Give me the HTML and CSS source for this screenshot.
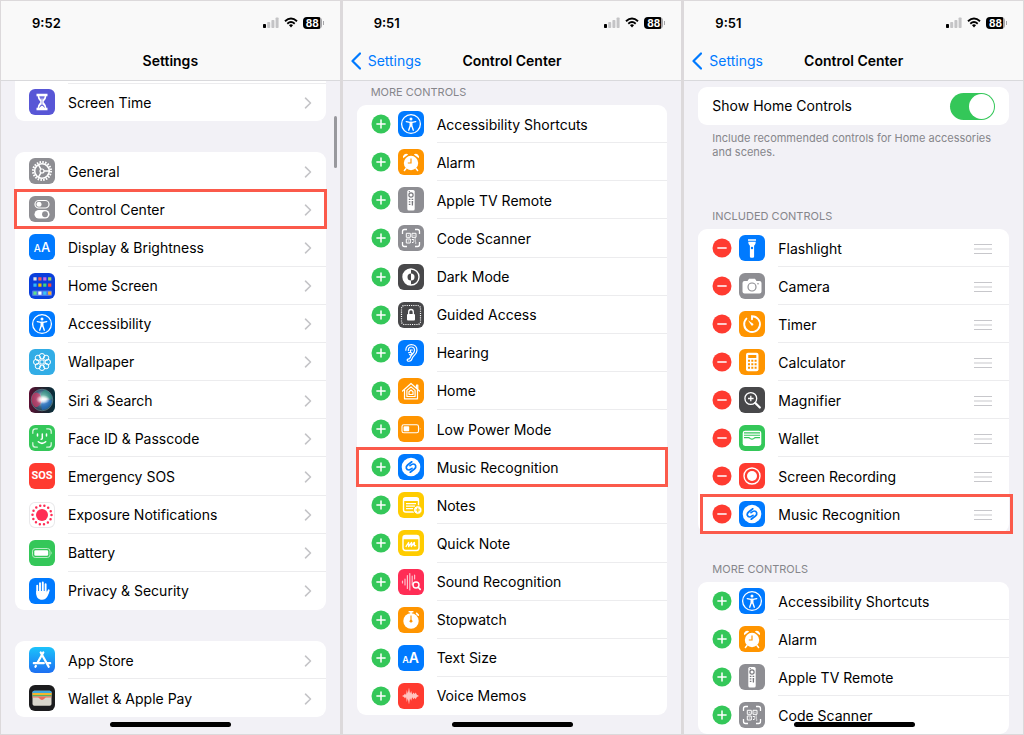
FILE: index.html
```html
<!DOCTYPE html>
<html lang="en">
<head>
    <meta charset="UTF-8">
    <meta name="viewport" content="width=device-width, initial-scale=1.0">
    <title>Settings - Control Center</title>
    <link rel="stylesheet" href="styles.css">
</head>
<body>
    <!-- icon sprite -->
    <svg class="sprite" aria-hidden="true">
        <defs>
            <linearGradient id="g-store" x1="0" y1="0" x2="0" y2="1">
                <stop offset="0" stop-color="#1cc3fb"/>
                <stop offset="1" stop-color="#1d6ff2"/>
            </linearGradient>
            <linearGradient id="g-siri" x1="0" y1="0" x2="1" y2="0">
                <stop offset="0" stop-color="#5c0f33"/>
                <stop offset="0.5" stop-color="#26222e"/>
                <stop offset="1" stop-color="#06303c"/>
            </linearGradient>
            <radialGradient id="g-orb" cx="0.55" cy="0.45" r="0.55">
                <stop offset="0" stop-color="#fff"/>
                <stop offset="0.3" stop-color="#b9c9d8"/>
                <stop offset="0.7" stop-color="#4a86a8" stop-opacity="0.7"/>
                <stop offset="1" stop-color="#2a5f70" stop-opacity="0.6"/>
            </radialGradient>
            <radialGradient id="g-glow">
                <stop offset="0" stop-color="#fff"/>
                <stop offset="0.4" stop-color="#fff" stop-opacity="0.8"/>
                <stop offset="1" stop-color="#fff" stop-opacity="0"/>
            </radialGradient>
        </defs>

        <symbol id="chevron" viewBox="0 0 8 12">
            <path d="M1.5 1.2 6.5 6 1.5 10.8" fill="none" stroke="currentColor" stroke-width="1.6" stroke-linecap="round" stroke-linejoin="round"/>
        </symbol>
        <symbol id="back" viewBox="0 0 10 18">
            <path d="M9 1.5 1.5 9 9 16.5" fill="none" stroke="currentColor" stroke-width="2.2" stroke-linecap="round" stroke-linejoin="round"/>
        </symbol>
        <symbol id="add" viewBox="0 0 20 20">
            <circle cx="10" cy="10" r="9.5" fill="#34c759"/>
            <path d="M10 5.9v8.2M5.9 10h8.2" stroke="#fff" stroke-width="1.5" stroke-linecap="round"/>
        </symbol>
        <symbol id="remove" viewBox="0 0 20 20">
            <circle cx="10" cy="10" r="9.5" fill="#ff3b30"/>
            <path d="M5.9 10h8.2" stroke="#fff" stroke-width="1.5" stroke-linecap="round"/>
        </symbol>
        <symbol id="grip" viewBox="0 0 20 12">
            <path d="M1 1.5h18M1 6h18M1 10.5h18" stroke="#c7c7cb" stroke-width="1.2"/>
        </symbol>

        <symbol id="signal" viewBox="0 0 16 11">
            <rect x="0" y="7" width="3" height="4" rx="0.8"/>
            <g fill="#c4c4c6">
                <rect x="4.2" y="5" width="3" height="6" rx="0.8"/>
                <rect x="8.4" y="3" width="3" height="8" rx="0.8"/>
                <rect x="12.6" y="0.5" width="3" height="10.5" rx="0.8"/>
            </g>
        </symbol>
        <symbol id="wifi" viewBox="0 0 14 11">
            <g fill="none" stroke="#000" stroke-width="1.9">
                <path d="M1 4.2Q7 -1.4 13 4.2"/>
                <path d="M3.3 6.7Q7 3.4 10.7 6.7"/>
            </g>
            <path d="M7 7.2q1.2 0 2 1L7 10.6 5 8.2q.8-1 2-1z"/>
        </symbol>

        <symbol id="hourglass" viewBox="0 0 26 26">
            <path d="M7.5 4.700h11v2.600h-1.200c0 3-2 4.200-2.800 5.700.8 1.500 2.800 2.700 2.800 5.700h1.200v2.600h-11v-2.600h1.200c0-3 2-4.200 2.800-5.700-.8-1.500-2.800-2.700-2.800-5.700H7.500z" fill="#fff"/>
            <path d="M10.300 7.300h5.400c-.2 1.700-1.300 2.500-2.100 3.900v4.300c1.100.6 1.900 1.600 2.200 3.200h-5.600c.3-1.600 1.100-2.600 2.200-3.200v-4.300c-.8-1.400-1.900-2.200-2.100-3.900z" fill="#5856d6" opacity=".85"/>
            <path d="M13 9.500v6M11 18.700q2-3 4 0z" stroke="#fff" fill="#fff"/>
        </symbol>
        <symbol id="gear" viewBox="0 0 26 26">
            <g fill="none" stroke="#fff">
                <circle cx="13" cy="13" r="9" stroke-width="2" stroke-dasharray="1.57 1.257"/>
                <circle cx="13" cy="13" r="7.3" stroke-width="1.6"/>
                <circle cx="13" cy="13" r="2" stroke-width="1.2"/>
                <path d="M15 13h5M12 11.300 9.500 6.800M12 14.700l-2.500 4.500" stroke-width="1.5"/>
            </g>
        </symbol>
        <symbol id="toggles" viewBox="0 0 26 26">
            <rect x="6" y="4.5" width="14" height="7.5" rx="3.75" fill="none" stroke="#fff" stroke-width="1.2"/>
            <circle cx="10" cy="8.25" r="2.5" fill="#fff"/>
            <rect x="5.5" y="14" width="15" height="8.5" rx="4.25" fill="#fff"/>
            <circle cx="16" cy="18.25" r="2.9" fill="#8e8e93"/>
        </symbol>
        <symbol id="homescreen" viewBox="0 0 26 26">
            <rect x="3" y="17.5" width="20" height="5.5" rx="1.2" fill="#4d75e8"/>
            <g stroke-width="3.2" fill="none">
                <path d="M4.400 5.800h3.200" stroke="#e5e5ea"/>
                <path d="M9.300 5.800h3.200" stroke="#ff5a52"/>
                <path d="M14.200 5.800h3.200" stroke="#c86bea"/>
                <path d="M19.100 5.800h3.200" stroke="#a4d65e"/>
                <path d="M4.400 12.200h3.200" stroke="#32b8f5"/>
                <path d="M9.300 12.200h3.200" stroke="#ffb800"/>
                <path d="M14.200 12.200h3.200" stroke="#43d67c"/>
                <path d="M19.100 12.200h3.200" stroke="#ff453a"/>
                <path d="M4.400 20.200h3.200" stroke="#5fe08a"/>
                <path d="M9.300 20.200h3.200" stroke="#fff"/>
                <path d="M14.200 20.200h3.200" stroke="#37c3f7"/>
                <path d="M19.100 20.200h3.200" stroke="#ffac30"/>
            </g>
        </symbol>
        <symbol id="access" viewBox="0 0 26 26">
            <circle cx="13" cy="13" r="9.4" fill="none" stroke="#fff" stroke-width="1.3"/>
            <circle cx="13" cy="7.9" r="1.5" fill="#fff"/>
            <path d="M8.300 10.600l3.600.8h2.200l3.600-.8M12.200 11.400v3.400l-1.500 4.400M13.800 11.400v3.400l1.500 4.400M13 11v4" fill="none" stroke="#fff" stroke-width="1.4" stroke-linecap="round" stroke-linejoin="round"/>
        </symbol>
        <symbol id="flower" viewBox="0 0 26 26">
            <g fill="none" stroke="#fff" stroke-width="1">
                <circle cx="13" cy="13" r="2.2"/>
                <circle cx="13" cy="7.2" r="2.7"/>
                <circle cx="17.1" cy="8.9" r="2.7"/>
                <circle cx="18.8" cy="13" r="2.7"/>
                <circle cx="17.1" cy="17.1" r="2.7"/>
                <circle cx="13" cy="18.8" r="2.7"/>
                <circle cx="8.9" cy="17.1" r="2.7"/>
                <circle cx="7.2" cy="13" r="2.7"/>
                <circle cx="8.9" cy="8.9" r="2.7"/>
            </g>
        </symbol>
        <symbol id="siri" viewBox="0 0 26 26">
            <rect width="26" height="26" fill="url(#g-siri)"/>
            <circle cx="13" cy="13" r="10.8" fill="url(#g-orb)" stroke="#6f8f99" stroke-width=".6"/>
            <path d="M3 9c3-6 8-4 10 3-1 6-5 9-7 8-3-2-4-7-3-11z" fill="#e0315f" opacity=".65"/>
            <path d="M13 13c4 0 8-1 10 1-1 5-5 9-10 9-1-3-1-6 0-10z" fill="#1e6fd0" opacity=".6"/>
            <path d="M12 12c-1-5 1-8 4-9 4 1 7 5 7 9-4-1-7-1-11 0z" fill="#2fa57f" opacity=".5"/>
            <ellipse cx="14" cy="12.500" rx="7" ry="4.500" fill="url(#g-glow)"/>
        </symbol>
        <symbol id="faceid" viewBox="0 0 26 26">
            <g fill="none" stroke="#fff" stroke-width="1.5" stroke-linecap="round">
                <path d="M3.800 8.300V6.500q0-2.700 2.700-2.700h1.800M17.700 3.800h1.800q2.700 0 2.700 2.700v1.800M22.200 17.700v1.800q0 2.700-2.700 2.700h-1.800M8.300 22.200H6.500q-2.700 0-2.700-2.700v-1.800" stroke="#d6f4dd" stroke-width="1.3"/>
                <path d="M8.500 9v2M17.500 9v2M13.300 9v4.200q0 1-1.200 1M9.300 16.800q3.700 3.200 7.400 0"/>
            </g>
        </symbol>
        <symbol id="exposure" viewBox="0 0 26 26">
            <circle cx="13" cy="13" r="6" fill="#ff2d55"/>
            <circle cx="13" cy="13" r="9.5" fill="none" stroke="#ff2d55" stroke-width="2.5" stroke-linecap="round" stroke-dasharray="0 4.264"/>
        </symbol>
        <symbol id="battery" viewBox="0 0 26 26">
            <rect x="3.5" y="8.5" width="17.5" height="9" rx="2.7" fill="none" stroke="#b9ecc6"/>
            <rect x="5.3" y="10.2" width="13.9" height="5.6" rx="1.4" fill="#fff"/>
            <path d="M22.300 11.200q1.500 1.800 0 3.600z" fill="#b9ecc6"/>
        </symbol>
        <symbol id="hand" viewBox="0 0 26 26">
            <g stroke="#fff" stroke-width="1.9" stroke-linecap="round" fill="none">
                <path d="M8.200 7.800v8M11 5.200v9M13.800 4.500v9M16.600 6.200v9M19.700 12.300l-2.400 5"/>
            </g>
            <path d="M7.300 13h10.200v2.300l1.900-2.200 1 .5c-1.200 3.400-2.500 8.200-7.200 8.200-4 0-5.900-2.600-5.900-6z" fill="#fff"/>
        </symbol>
        <symbol id="appstore" viewBox="0 0 26 26">
            <rect width="26" height="26" fill="url(#g-store)"/>
            <g stroke="#fff" stroke-width="2.2" stroke-linecap="round" fill="none">
                <path d="M14.300 5.500 8.200 16.200M11.700 5.500l8 14.300M4.800 16.200h10M18.300 16.200h2.900M6.900 18.900l-.5.900"/>
            </g>
        </symbol>
        <symbol id="applepay" viewBox="0 0 26 26">
            <rect x="3.5" y="5.8" width="19" height="15" rx="1.8" fill="#d9d6cc"/>
            <path d="M3.500 8V7.300q0-1.500 1.500-1.500h16q1.500 0 1.500 1.500V8z" fill="#3fa9e0"/>
            <path d="M3.500 8h19v2h-19z" fill="#f4b62c"/>
            <path d="M3.500 10h19v1.500h-19z" fill="#58b267"/>
            <path d="M3.500 11.400h19v1.200h-5.300q-1 0-1.600 1-2.600 2.600-5.200 0-.6-1-1.600-1H3.500z" fill="#ef6a5d"/>
        </symbol>

        <symbol id="alarm" viewBox="0 0 26 26">
            <g fill="#fff">
                <circle cx="13" cy="14" r="7.2"/>
                <path d="M5.200 9.300a3.200 3.200 0 0 1 5-3.700zM20.800 9.300a3.200 3.200 0 0 0-5-3.700z"/>
            </g>
            <path d="M8 19.500l-1.600 2M18 19.500l1.600 2" stroke="#fff" stroke-width="1.5" stroke-linecap="round"/>
            <path d="M13 9.500V14H9.800" fill="none" stroke="#ff9500" stroke-width="1.2"/>
        </symbol>
        <symbol id="remote" viewBox="0 0 26 26">
            <rect x="9.3" y="3" width="7.4" height="20.5" rx="1.6" fill="#fff"/>
            <circle cx="13" cy="8" r="2.1" fill="none" stroke="#77777c" stroke-width="1.2"/>
            <path d="M10.800 12.300h1.600M13.600 12.300h1.600M10.800 14.800h1.600M13.600 14.800h1.600M10.800 17.300h1.600M14.400 14v4.500M10.800 4.700h1" stroke="#77777c" stroke-width="1.3"/>
        </symbol>
        <symbol id="scanner" viewBox="0 0 26 26">
            <g fill="none" stroke="#fff" stroke-width="1.3">
                <path d="M4.500 9V6.500q0-2 2-2H9M17 4.500h2.500q2 0 2 2V9M21.500 17v2.500q0 2-2 2H17M9 21.500H6.500q-2 0-2-2V17"/>
                <path d="M8.300 8.300h4v4h-4zM14 8.300h4v4h-4zM8.300 14h4v4h-4zM9.800 10.300h1M15.500 10.300h1M9.800 16h1" stroke-width="1"/>
                <path d="M13.800 14.500h2M16.500 16h1.500M14 17.500h1.500M16.500 14h1.300M15 16h1M17 18h1.300" stroke-width="1.2"/>
            </g>
        </symbol>
        <symbol id="dark" viewBox="0 0 26 26">
            <circle cx="13" cy="13" r="8" fill="none" stroke="#fff" stroke-width="1.4"/>
            <path d="M13 5a8 8 0 0 0 0 16v-4.500a3.500 3.500 0 0 1 0-7z" fill="#fff"/>
            <path d="M13 9.500a3.500 3.500 0 0 1 0 7z" fill="#fff"/>
        </symbol>
        <symbol id="guided" viewBox="0 0 26 26">
            <rect x="3.5" y="3.5" width="19" height="19" rx="3" fill="none" stroke="#fff" stroke-width="1.2" stroke-dasharray="1.1 1.1"/>
            <rect x="9" y="12" width="8" height="6.5" rx="1" fill="#fff"/>
            <path d="M10.700 12V9.900q0-2.400 2.300-2.400t2.300 2.400V12" fill="none" stroke="#fff" stroke-width="1.3"/>
        </symbol>
        <symbol id="ear" viewBox="0 0 26 26">
            <g fill="none" stroke="#fff" stroke-width="1.2" stroke-linecap="round" stroke-linejoin="round">
                <path d="M7.800 10.200C7.800 6.800 10.200 4.600 13.300 4.600c3.500 0 5.700 2.500 5.700 5.600 0 4.200-4 5.300-4.800 8.200-.7 2.400-2.300 3.200-4.200 2.700-1.200-.4-1-1.900.1-1.900 2.500 0 2-2.300 3.400-4.300"/>
                <path d="M10.300 10.500c0-2.200 1.200-3.500 3-3.500 2 0 3.200 1.400 3.200 3.200 0 2.200-1.500 3.200-2.700 4.800M10.600 12.700c1-.6 2.700-.6 3.200.5.500 1.200-1 2.300-2.200 1.300M12.700 12.300l-.4-2.300h2"/>
            </g>
        </symbol>
        <symbol id="home" viewBox="0 0 26 26">
            <g fill="none" stroke="#fff" stroke-width="1.2" stroke-linejoin="round" stroke-linecap="round">
                <path d="M4.500 13 13 5.500l8.500 7.500M18.500 9.800V7h1.300v4"/>
                <path d="M6.500 12v8.800h13V12"/>
                <path d="M8.900 12.400 13 8.900l4.100 3.500v6.100H8.900z"/>
                <path d="M11 13.700l2-1.700 2 1.700v2.800h-4z"/>
            </g>
        </symbol>
        <symbol id="lowpower" viewBox="0 0 26 26">
            <rect x="4" y="8.7" width="16.5" height="8" rx="1.8" fill="none" stroke="#fff" stroke-width="1.1"/>
            <rect x="5.6" y="10.2" width="5.6" height="5" rx=".8" fill="#fff"/>
            <path d="M21.800 11.300q1.400 1.400 0 2.800z" fill="#fff"/>
        </symbol>
        <symbol id="shazam" viewBox="0 0 26 26">
            <circle cx="13" cy="13" r="9.3" fill="#fff"/>
            <g fill="none" stroke="#007aff" stroke-width="1.7" stroke-linecap="round">
                <path d="M13.800 7.800 9.600 11c-2.500 2-1.300 5 1.200 5 1.200 0 1.800-.6 3.200-1.700"/>
                <path d="M12.200 18.200l4.200-3.200c2.500-2 1.300-5-1.200-5-1.200 0-1.800.6-3.200 1.700"/>
            </g>
        </symbol>
        <symbol id="notes" viewBox="0 0 26 26">
            <rect x="5.5" y="5.7" width="15" height="14.3" rx="2.2" fill="none" stroke="#fff" stroke-width="1.4"/>
            <path d="M5.500 6h15v3h-15z" fill="#fff"/>
            <path d="M8 11.700h10M8 14.200h9M8 16.700h7" stroke="#fff" stroke-width="1.2"/>
            <circle cx="19.8" cy="18" r="4.3" fill="#fff" stroke="#ffcc00"/>
            <path d="M19.800 15.800v4.400M17.600 18H22" stroke="#ffcc00" stroke-width="1.2"/>
        </symbol>
        <symbol id="quicknote" viewBox="0 0 26 26">
            <rect x="5" y="5.5" width="16" height="15" rx="2.4" fill="none" stroke="#fff" stroke-width="1.4"/>
            <path d="M5 6h16v3.200H5z" fill="#fff"/>
            <path d="M7.800 16.800l2.800-4.300v4l3-4-.4 4 2.800-3.800q.6-.7.500.4l-.3 2.700 2-.1" fill="none" stroke="#fff" stroke-width="1.3" stroke-linejoin="round"/>
        </symbol>
        <symbol id="sound" viewBox="0 0 26 26">
            <g stroke="#ffc0cc" stroke-width="1.2" stroke-linecap="round" fill="none">
                <path d="M4.500 12v2M7 10v6M9.400 6.500v13M11.800 4.500v16.500M14.200 7v9M16.600 6v4"/>
            </g>
            <circle cx="18" cy="16" r="3" fill="none" stroke="#fff" stroke-width="1.4"/>
            <path d="M20.200 18.200l2 2.200" stroke="#fff" stroke-width="1.6" stroke-linecap="round"/>
        </symbol>
        <symbol id="stopwatch" viewBox="0 0 26 26">
            <circle cx="13" cy="14" r="7.7" fill="#fff"/>
            <path d="M11.200 4.800h3.600M13 5v3M18.600 6.400l1.700 1.700" stroke="#fff" stroke-width="1.6" stroke-linecap="round"/>
            <path d="M13 8.500v5" stroke="#ff9500" stroke-width="1.1"/>
            <circle cx="13" cy="14.2" r="1.4" fill="#ff9500"/>
        </symbol>
        <symbol id="voice" viewBox="0 0 26 26">
            <path d="M4 13l2-1 1-1.500 1 1.500.8-5 1 3.500L11 4.500l1 6 1.200-2.500 1 3.500 1.300-2 1.200 1.500 1-1.500 1.200 2.200 2.100 1.300-2.100 1-1.200 2.300-1-1.500-1.200 1.500-1.300-2-1 3.500-1.200-2.500-1 6.200-1.200-6-1 3.500-.8-5-1 1.500-1-1.500z" fill="#ffc4c0"/>
        </symbol>

        <symbol id="flashlight" viewBox="0 0 26 26">
            <path d="M9 4.200h8v1.500H9zM9.200 6.700h7.600q0 2.400-1.700 4.100v10.700q0 1.300-1.300 1.300h-1.600q-1.300 0-1.300-1.300V10.800q-1.700-1.700-1.700-4.100z" fill="#fff"/>
            <circle cx="13" cy="13" r="1.2" fill="#007aff"/>
        </symbol>
        <symbol id="camera" viewBox="0 0 26 26">
            <path d="M5.500 8h3l1.500-2.200h6L17.500 8h3q2 0 2 2v8.500q0 2-2 2h-15q-2 0-2-2V10q0-2 2-2z" fill="#fff"/>
            <circle cx="13" cy="14" r="4" fill="none" stroke="#8e8e93" stroke-width="1.2"/>
            <circle cx="19" cy="10.7" r=".8" fill="#8e8e93"/>
        </symbol>
        <symbol id="timer" viewBox="0 0 26 26">
            <path d="M13 8.300V5.200A7.900 7.900 0 1 1 7.400 7.600" fill="none" stroke="#fff" stroke-width="1.9" stroke-linecap="round"/>
            <path d="M9 9.200l5.200 3.500q.8 1.500-.8 1.900-.9.200-1.300-.6z" fill="#fff"/>
        </symbol>
        <symbol id="calculator" viewBox="0 0 26 26">
            <rect x="7" y="3.8" width="12.5" height="18.5" rx="2" fill="#fff"/>
            <path d="M9.200 6h8.100v3H9.200z" fill="#ff9500"/>
            <path d="M9 11.800h8.600M9 15.300h8.600M9 18.800h8.600" stroke="#ff9500" stroke-width="2" stroke-dasharray="2 1.3"/>
        </symbol>
        <symbol id="magnifier" viewBox="0 0 26 26">
            <circle cx="11.8" cy="11.5" r="5.9" fill="none" stroke="#fff" stroke-width="1.3"/>
            <path d="M16.300 16l4.500 4.500" stroke="#fff" stroke-width="2.300" stroke-linecap="round"/>
            <path d="M11.800 8.700v5.600M9 11.500h5.600" stroke="#fff" stroke-width="1.3"/>
        </symbol>
        <symbol id="wallet" viewBox="0 0 26 26">
            <rect x="3.7" y="5.7" width="18.6" height="15.3" rx="2.4" fill="#fff"/>
            <path d="M5 7.900h16M5 10.200h16M5 12.600h4.500q1 0 1.500.8 2 1.500 4 0 .5-.8 1.500-.8H21" fill="none" stroke="#34c759" stroke-width="1.1"/>
        </symbol>
        <symbol id="record" viewBox="0 0 26 26">
            <circle cx="13" cy="13" r="8" fill="none" stroke="#fff" stroke-width="1.4"/>
            <circle cx="13" cy="13" r="5" fill="#fff"/>
        </symbol>
    </svg>

    <!-- Settings list -->
    <section class="phone">
        <header class="bar">
            <div class="status">
                <span class="time">9:52</span>
                <svg width="16" height="11"><use href="#signal"/></svg>
                <svg width="14" height="11"><use href="#wifi"/></svg>
                <span class="charge">88</span>
            </div>
            <div class="nav"><h1>Settings</h1></div>
        </header>
        <main class="content settings">
            <nav class="card card-scrolled">
                <a class="row" href="#"><svg class="icon purple"><use href="#hourglass"/></svg><span class="label">Screen Time<svg class="chevron"><use href="#chevron"/></svg></span></a>
            </nav>
            <nav class="card card-fill">
                <a class="row" href="#"><svg class="icon gray"><use href="#gear"/></svg><span class="label">General<svg class="chevron"><use href="#chevron"/></svg></span></a>
                <a class="row highlight" href="#"><svg class="icon gray"><use href="#toggles"/></svg><span class="label">Control Center<svg class="chevron"><use href="#chevron"/></svg></span></a>
                <a class="row" href="#"><span class="icon glyph blue"><small>A</small>A</span><span class="label">Display &amp; Brightness<svg class="chevron"><use href="#chevron"/></svg></span></a>
                <a class="row" href="#"><svg class="icon navy"><use href="#homescreen"/></svg><span class="label">Home Screen<svg class="chevron"><use href="#chevron"/></svg></span></a>
                <a class="row" href="#"><svg class="icon blue"><use href="#access"/></svg><span class="label">Accessibility<svg class="chevron"><use href="#chevron"/></svg></span></a>
                <a class="row" href="#"><svg class="icon cyan"><use href="#flower"/></svg><span class="label">Wallpaper<svg class="chevron"><use href="#chevron"/></svg></span></a>
                <a class="row" href="#"><svg class="icon"><use href="#siri"/></svg><span class="label">Siri &amp; Search<svg class="chevron"><use href="#chevron"/></svg></span></a>
                <a class="row" href="#"><svg class="icon green"><use href="#faceid"/></svg><span class="label">Face ID &amp; Passcode<svg class="chevron"><use href="#chevron"/></svg></span></a>
                <a class="row" href="#"><span class="icon glyph sos red">SOS</span><span class="label">Emergency SOS<svg class="chevron"><use href="#chevron"/></svg></span></a>
                <a class="row" href="#"><svg class="icon outlined"><use href="#exposure"/></svg><span class="label">Exposure Notifications<svg class="chevron"><use href="#chevron"/></svg></span></a>
                <a class="row" href="#"><svg class="icon green"><use href="#battery"/></svg><span class="label">Battery<svg class="chevron"><use href="#chevron"/></svg></span></a>
                <a class="row" href="#"><svg class="icon blue"><use href="#hand"/></svg><span class="label">Privacy &amp; Security<svg class="chevron"><use href="#chevron"/></svg></span></a>
            </nav>
            <nav class="card">
                <a class="row" href="#"><svg class="icon"><use href="#appstore"/></svg><span class="label">App Store<svg class="chevron"><use href="#chevron"/></svg></span></a>
                <a class="row" href="#"><svg class="icon black"><use href="#applepay"/></svg><span class="label">Wallet &amp; Apple Pay<svg class="chevron"><use href="#chevron"/></svg></span></a>
            </nav>
        </main>
        <div class="scrollbar"></div>
        <div class="home-indicator"></div>
    </section>

    <!-- Control Center: more controls -->
    <section class="phone">
        <header class="bar">
            <div class="status">
                <span class="time">9:51</span>
                <svg width="16" height="11"><use href="#signal"/></svg>
                <svg width="14" height="11"><use href="#wifi"/></svg>
                <span class="charge">88</span>
            </div>
            <div class="nav">
                <a class="back" href="#"><svg width="10" height="18"><use href="#back"/></svg>Settings</a>
                <h1>Control Center</h1>
            </div>
        </header>
        <main class="content more">
            <h2>MORE CONTROLS</h2>
            <ul class="card card-fill">
                <li class="row"><button aria-label="Add Accessibility Shortcuts"><svg><use href="#add"/></svg></button><svg class="icon blue"><use href="#access"/></svg><span class="label">Accessibility Shortcuts</span></li>
                <li class="row"><button aria-label="Add Alarm"><svg><use href="#add"/></svg></button><svg class="icon orange"><use href="#alarm"/></svg><span class="label">Alarm</span></li>
                <li class="row"><button aria-label="Add Apple TV Remote"><svg><use href="#add"/></svg></button><svg class="icon gray"><use href="#remote"/></svg><span class="label">Apple TV Remote</span></li>
                <li class="row"><button aria-label="Add Code Scanner"><svg><use href="#add"/></svg></button><svg class="icon gray"><use href="#scanner"/></svg><span class="label">Code Scanner</span></li>
                <li class="row"><button aria-label="Add Dark Mode"><svg><use href="#add"/></svg></button><svg class="icon dark"><use href="#dark"/></svg><span class="label">Dark Mode</span></li>
                <li class="row"><button aria-label="Add Guided Access"><svg><use href="#add"/></svg></button><svg class="icon dark"><use href="#guided"/></svg><span class="label">Guided Access</span></li>
                <li class="row"><button aria-label="Add Hearing"><svg><use href="#add"/></svg></button><svg class="icon blue"><use href="#ear"/></svg><span class="label">Hearing</span></li>
                <li class="row"><button aria-label="Add Home"><svg><use href="#add"/></svg></button><svg class="icon orange"><use href="#home"/></svg><span class="label">Home</span></li>
                <li class="row"><button aria-label="Add Low Power Mode"><svg><use href="#add"/></svg></button><svg class="icon orange"><use href="#lowpower"/></svg><span class="label">Low Power Mode</span></li>
                <li class="row highlight"><button aria-label="Add Music Recognition"><svg><use href="#add"/></svg></button><svg class="icon blue"><use href="#shazam"/></svg><span class="label">Music Recognition</span></li>
                <li class="row"><button aria-label="Add Notes"><svg><use href="#add"/></svg></button><svg class="icon yellow"><use href="#notes"/></svg><span class="label">Notes</span></li>
                <li class="row"><button aria-label="Add Quick Note"><svg><use href="#add"/></svg></button><svg class="icon yellow"><use href="#quicknote"/></svg><span class="label">Quick Note</span></li>
                <li class="row"><button aria-label="Add Sound Recognition"><svg><use href="#add"/></svg></button><svg class="icon pink"><use href="#sound"/></svg><span class="label">Sound Recognition</span></li>
                <li class="row"><button aria-label="Add Stopwatch"><svg><use href="#add"/></svg></button><svg class="icon orange"><use href="#stopwatch"/></svg><span class="label">Stopwatch</span></li>
                <li class="row"><button aria-label="Add Text Size"><svg><use href="#add"/></svg></button><span class="icon glyph text-size blue"><small>A</small>A</span><span class="label">Text Size</span></li>
                <li class="row"><button aria-label="Add Voice Memos"><svg><use href="#add"/></svg></button><svg class="icon red"><use href="#voice"/></svg><span class="label">Voice Memos</span></li>
            </ul>
        </main>
        <div class="home-indicator"></div>
    </section>

    <!-- Control Center: included controls -->
    <section class="phone">
        <header class="bar">
            <div class="status">
                <span class="time">9:51</span>
                <svg width="16" height="11"><use href="#signal"/></svg>
                <svg width="14" height="11"><use href="#wifi"/></svg>
                <span class="charge">88</span>
            </div>
            <div class="nav">
                <a class="back" href="#"><svg width="10" height="18"><use href="#back"/></svg>Settings</a>
                <h1>Control Center</h1>
            </div>
        </header>
        <main class="content included">
            <div class="card">
                <div class="row switch-row">
                    <label for="homeControls">Show Home Controls</label>
                    <input type="checkbox" id="homeControls" class="switch" role="switch" checked>
                </div>
            </div>
            <p class="note">Include recommended controls for Home accessories and scenes.</p>
            <h2>INCLUDED CONTROLS</h2>
            <ul class="card">
                <li class="row"><button aria-label="Remove Flashlight"><svg><use href="#remove"/></svg></button><svg class="icon blue"><use href="#flashlight"/></svg><span class="label">Flashlight<svg class="grip"><use href="#grip"/></svg></span></li>
                <li class="row"><button aria-label="Remove Camera"><svg><use href="#remove"/></svg></button><svg class="icon gray"><use href="#camera"/></svg><span class="label">Camera<svg class="grip"><use href="#grip"/></svg></span></li>
                <li class="row"><button aria-label="Remove Timer"><svg><use href="#remove"/></svg></button><svg class="icon orange"><use href="#timer"/></svg><span class="label">Timer<svg class="grip"><use href="#grip"/></svg></span></li>
                <li class="row"><button aria-label="Remove Calculator"><svg><use href="#remove"/></svg></button><svg class="icon orange"><use href="#calculator"/></svg><span class="label">Calculator<svg class="grip"><use href="#grip"/></svg></span></li>
                <li class="row"><button aria-label="Remove Magnifier"><svg><use href="#remove"/></svg></button><svg class="icon dark"><use href="#magnifier"/></svg><span class="label">Magnifier<svg class="grip"><use href="#grip"/></svg></span></li>
                <li class="row"><button aria-label="Remove Wallet"><svg><use href="#remove"/></svg></button><svg class="icon green"><use href="#wallet"/></svg><span class="label">Wallet<svg class="grip"><use href="#grip"/></svg></span></li>
                <li class="row"><button aria-label="Remove Screen Recording"><svg><use href="#remove"/></svg></button><svg class="icon red"><use href="#record"/></svg><span class="label">Screen Recording<svg class="grip"><use href="#grip"/></svg></span></li>
                <li class="row highlight"><button aria-label="Remove Music Recognition"><svg><use href="#remove"/></svg></button><svg class="icon blue"><use href="#shazam"/></svg><span class="label">Music Recognition<svg class="grip"><use href="#grip"/></svg></span></li>
            </ul>
            <h2>MORE CONTROLS</h2>
            <ul class="card">
                <li class="row"><button aria-label="Add Accessibility Shortcuts"><svg><use href="#add"/></svg></button><svg class="icon blue"><use href="#access"/></svg><span class="label">Accessibility Shortcuts</span></li>
                <li class="row"><button aria-label="Add Alarm"><svg><use href="#add"/></svg></button><svg class="icon orange"><use href="#alarm"/></svg><span class="label">Alarm</span></li>
                <li class="row"><button aria-label="Add Apple TV Remote"><svg><use href="#add"/></svg></button><svg class="icon gray"><use href="#remote"/></svg><span class="label">Apple TV Remote</span></li>
                <li class="row"><button aria-label="Add Code Scanner"><svg><use href="#add"/></svg></button><svg class="icon gray"><use href="#scanner"/></svg><span class="label">Code Scanner</span></li>
            </ul>
        </main>
        <div class="home-indicator"></div>
    </section>
</body>
</html>
```

FILE: styles.css
```css
* {
    box-sizing: border-box;
}
body {
    margin: 0;
    padding: 1px;
    height: 100vh;
    display: grid;
    grid-template-columns: repeat(3, 1fr);
    grid-template-rows: 100%;
    gap: 3px;
    background: #dcd9db;
    color: #000;
    font-family: Inter, "Liberation Sans", sans-serif;
    font-size: 14px;
    line-height: 20px;
}
h1, h2, p, ul {
    margin: 0;
    padding: 0;
}
ul {
    list-style: none;
}
a {
    color: inherit;
    text-decoration: none;
}
button {
    padding: 0;
    border: none;
    background: none;
    cursor: pointer;
}
.sprite {
    position: absolute;
    width: 0;
    height: 0;
}

.phone {
    position: relative;
    display: flex;
    flex-direction: column;
    min-width: 0;
    overflow: hidden;
    background: #f2f1f6;
}

/* status bar and title */
.bar {
    flex: none;
    padding-bottom: 2px;
    background: #f9f9f9;
    border-bottom: 1px solid #d9d9dc;
}
.status {
    display: flex;
    align-items: center;
    gap: 5px;
    height: 43px;
    padding: 0 18px 0 31px;
}
.time {
    margin-right: auto;
    font-size: 13px;
    font-weight: 600;
}
.charge {
    position: relative;
    width: 19px;
    height: 12px;
    border-radius: 4px;
    background: linear-gradient(90deg, #000 88%, #a5a5a8 88%);
    color: #fff;
    font-size: 10px;
    font-weight: 700;
    line-height: 12px;
    text-align: center;
}
.charge::after {
    content: "";
    position: absolute;
    top: 4px;
    right: -2px;
    width: 1px;
    height: 4px;
    background: #a5a5a8;
}
.nav {
    display: grid;
    grid-template-columns: 1fr auto 1fr;
    align-items: center;
    height: 34px;
    padding: 0 8px;
}
.nav h1 {
    grid-column: 2;
    font-size: 14px;
    font-weight: 600;
}
.back {
    display: flex;
    align-items: center;
    gap: 7px;
    color: #007aff;
}

/* lists */
.content {
    flex: 1;
    display: flex;
    flex-direction: column;
    min-height: 0;
    padding: 0 14px;
}
.settings {
    gap: 31px;
    padding-bottom: 17px;
}
.more {
    padding-top: 4px;
    padding-bottom: 19px;
}
.included {
    padding-top: 6px;
}
.content h2 {
    flex: none;
    margin: 0 14px 6px;
    color: #86868b;
    font-size: 11px;
    font-weight: 400;
    line-height: 14px;
}
.included .note {
    margin: 6px 14px 50px;
    color: #86868b;
    font-size: 11px;
    line-height: 14px;
}
.included .card + h2 {
    margin-top: 29px;
}
.card {
    flex: none;
    display: flex;
    flex-direction: column;
    background: #fff;
    border-radius: 9px;
}
.card-fill {
    flex: 1 0 auto;
}
.card-scrolled {
    padding-top: 2px;
    border-radius: 0 0 9px 9px;
}
.row {
    position: relative;
    flex: 1 0 38px;
    display: flex;
    align-items: center;
    padding-left: 14px;
}
.row button {
    width: 20px;
    height: 20px;
    margin-right: 7px;
}
.row button svg {
    display: block;
    width: 20px;
    height: 20px;
}
.label {
    flex: 1;
    align-self: stretch;
    display: flex;
    align-items: center;
    justify-content: space-between;
    margin-left: 13px;
    padding-top: 2px;
    padding-right: 14px;
    border-bottom: 1px solid #ececee;
}
.row:last-child .label {
    border-bottom-color: transparent;
}
.card-scrolled .label {
    border-top: 1px solid #ececee;
}
.chevron {
    width: 8px;
    height: 12px;
    color: #c4c4c7;
}
.grip {
    width: 20px;
    height: 12px;
    margin-right: 2px;
}
.highlight::after {
    content: "";
    position: absolute;
    inset: -1px;
    border: 3px solid #fb5a4b;
}
.included .highlight::after {
    left: 2px;
    right: -4px;
}

.switch-row {
    justify-content: space-between;
    padding-right: 14px;
}
.switch {
    appearance: none;
    width: 45px;
    height: 27px;
    margin: 0;
    padding: 1px;
    border-radius: 14px;
    background: #34c759;
}
.switch::before {
    content: "";
    display: block;
    width: 25px;
    height: 25px;
    border-radius: 50%;
    background: #fff;
}
.switch:checked::before {
    margin-left: auto;
}

/* app icons */
.icon {
    flex: none;
    width: 26px;
    height: 26px;
    border-radius: 6px;
}
.glyph {
    color: #fff;
    font-size: 13px;
    font-weight: 500;
    line-height: 26px;
    text-align: center;
}
.glyph small {
    font-size: 10px;
}
.text-size {
    font-size: 14px;
    font-weight: 600;
}
.text-size small {
    font-size: 9px;
}
.sos {
    font-family: Roboto, sans-serif;
    font-size: 11px;
    font-weight: 700;
}
.blue { background: #007aff; }
.gray { background: #8e8e93; }
.dark { background: #48484a; }
.black { background: #1c1c1e; }
.navy { background: #0a3fdc; }
.cyan { background: #32ade6; }
.purple { background: #5856d6; }
.green { background: #34c759; }
.orange { background: #ff9500; }
.yellow { background: #ffcc00; }
.pink { background: #ff2d55; }
.red { background: #ff3b30; }
.outlined { box-shadow: inset 0 0 0 1px #e9e9eb; }

.scrollbar {
    position: absolute;
    top: 115px;
    right: 3px;
    width: 3px;
    height: 52px;
    border-radius: 2px;
    background: #98989d;
}
.home-indicator {
    position: absolute;
    bottom: 7px;
    left: 50%;
    width: 121px;
    height: 5px;
    margin-left: -60px;
    border-radius: 3px;
    background: #000;
}
```
